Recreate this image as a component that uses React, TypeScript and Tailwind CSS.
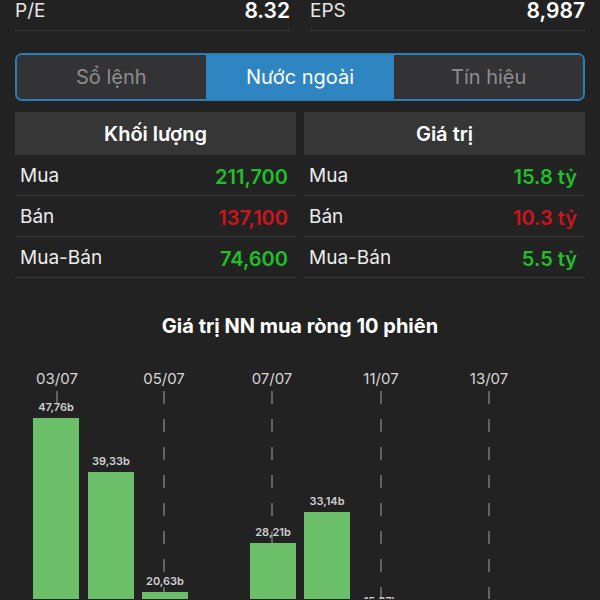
import React from "react";

const bars = [
  { x: 33, top: 419, label: "47,76b" },
  { x: 88, top: 473, label: "39,33b" },
  { x: 142, top: 593, label: "20,63b" },
  { x: 250, top: 544, label: "28,21b" },
  { x: 304, top: 513, label: "33,14b" },
];

const dates = [
  { x: 57, label: "03/07" },
  { x: 164, label: "05/07" },
  { x: 272, label: "07/07" },
  { x: 381, label: "11/07" },
  { x: 489, label: "13/07" },
];

const OFF = 340;

function Chart() {
  return (
    <svg width={600} height={260} className="block" style={{ fontFamily: "Inter, 'Liberation Sans', sans-serif" }}>
      {dates.map((d) => (
        <line key={"l" + d.x} x1={d.x} x2={d.x} y1={392 - OFF} y2={260} stroke="#7a7a7a" strokeWidth={1.5} strokeDasharray="13 15" />
      ))}
      {dates.map((d) => (
        <text key={"t" + d.x} x={d.x} y={385 - OFF} textAnchor="middle" fontSize={15} fill="#d6d6d6">
          {d.label}
        </text>
      ))}
      {bars.map((b) => (
        <g key={b.label}>
          <rect x={b.x} y={b.top - OFF} width={46} height={300} fill="#6cbf69" />
          <text x={b.x + 23} y={b.top - OFF - 7} textAnchor="middle" fontSize={11} fontWeight={600} fill="#cfcfcf">
            {b.label}
          </text>
        </g>
      ))}
      <text x={381} y={606 - OFF} textAnchor="middle" fontSize={11} fontWeight={600} fill="#cfcfcf">
        15,07b
      </text>
    </svg>
  );
}

function Row({ label, value, color }: { label: string; value: string; color: string }) {
  return (
    <div className="flex items-center justify-between h-[41px] pt-[3px] pl-[5px] pr-[8px] border-b border-[#383838]">
      <span className="text-[19px] text-[#ececec]">{label}</span>
      <span className={"text-[20px] font-semibold " + color}>{value}</span>
    </div>
  );
}

export default function App() {
  return (
    <div className="w-[600px] h-[600px] overflow-hidden bg-[#222222] font-['Inter','Liberation_Sans',sans-serif]">
      <div className="flex px-[15px] gap-[20px]">
        <div className="flex-1 flex items-end justify-between h-[31px] pb-[7px] border-b border-[#383838]">
          <span className="text-[19px] leading-[24px] text-[#e6e6e6]">P/E</span>
          <span className="text-[21px] leading-[24px] font-semibold text-white">8.32</span>
        </div>
        <div className="flex-1 flex items-end justify-between h-[31px] pb-[7px] border-b border-[#383838]">
          <span className="text-[19px] leading-[24px] text-[#e6e6e6]">EPS</span>
          <span className="text-[21px] leading-[24px] font-semibold text-white">8,987</span>
        </div>
      </div>

      <div className="mx-[15px] mt-[22px] h-[48px] flex rounded-[7px] border-2 border-[#2a7db5] overflow-hidden">
        <div className="flex-1 flex items-center justify-center bg-[#333335] text-[20px] text-[#8d8d8d]">Sổ lệnh</div>
        <div className="flex-1 flex items-center justify-center bg-[#2e85c1] text-[20px] text-white">Nước ngoài</div>
        <div className="flex-1 flex items-center justify-center bg-[#333335] text-[20px] text-[#8d8d8d]">Tín hiệu</div>
      </div>

      <div className="flex px-[15px] gap-[8px] mt-[11px]">
        <div className="flex-1">
          <div className="h-[43px] bg-[#363636] flex items-center justify-center text-[20px] font-semibold text-white">Khối lượng</div>
          <Row label="Mua" value="211,700" color="text-[#1fbf2a]" />
          <Row label="Bán" value="137,100" color="text-[#d0141c]" />
          <Row label="Mua-Bán" value="74,600" color="text-[#1fbf2a]" />
        </div>
        <div className="flex-1">
          <div className="h-[43px] bg-[#363636] flex items-center justify-center text-[20px] font-semibold text-white">Giá trị</div>
          <Row label="Mua" value="15.8 tỷ" color="text-[#1fbf2a]" />
          <Row label="Bán" value="10.3 tỷ" color="text-[#d0141c]" />
          <Row label="Mua-Bán" value="5.5 tỷ" color="text-[#1fbf2a]" />
        </div>
      </div>

      <div className="mt-[35px] h-[26px] leading-[26px] text-center text-[20px] font-bold text-white">
        Giá trị NN mua ròng 10 phiên
      </div>
      <Chart />
    </div>
  );
}
